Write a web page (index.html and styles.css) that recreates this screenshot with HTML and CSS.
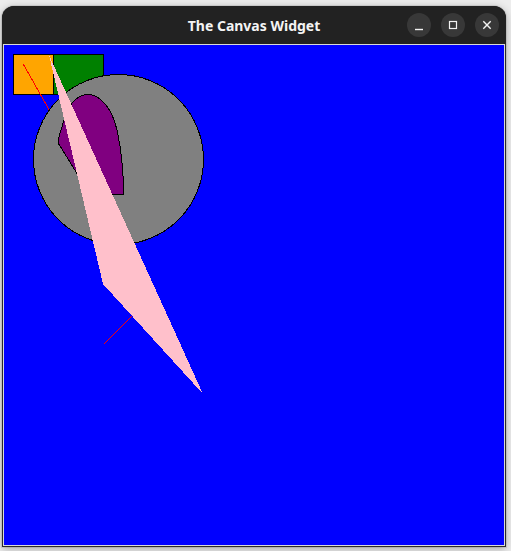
FILE: index.html
```html
<!DOCTYPE html>
<html>
<head>
<meta charset="utf-8">
<title>The Canvas Widget</title>
<link rel="stylesheet" href="styles.css">
</head>
<body>
<div class="window">
  <div class="titlebar">
    <span class="title">The Canvas Widget</span>
    <div class="controls">
      <span class="btn"><svg width="24" height="24" viewBox="0 0 24 24"><path d="M8 16.5h8" stroke="#f2f2f2" stroke-width="1.4" fill="none"/></svg></span>
      <span class="btn"><svg width="24" height="24" viewBox="0 0 24 24"><rect x="8.5" y="8.5" width="7" height="7" stroke="#f2f2f2" stroke-width="1.2" fill="none"/></svg></span>
      <span class="btn"><svg width="24" height="24" viewBox="0 0 24 24"><path d="M8.3 8.3l7.4 7.4M15.7 8.3l-7.4 7.4" stroke="#f2f2f2" stroke-width="1.4" fill="none"/></svg></span>
    </div>
  </div>
  <div class="body">
    <div class="canvas">
      <svg class="drawing" width="500" height="500" viewBox="1 1 500 500">
        <rect x="10.5" y="10.5" width="40" height="40" fill="#ffa500" stroke="#000" stroke-width="1"/>
        <rect x="50.5" y="10.5" width="50" height="40" fill="#008000" stroke="#000" stroke-width="1"/>
        <polyline points="20.5,20.5 150.5,250.5 100.5,300.5" fill="none" stroke="#ff0000" stroke-width="1"/>
        <circle cx="115.5" cy="115.5" r="85" fill="#808080" stroke="#000" stroke-width="1"/>
        <path d="M120.5 150.5 L87 150.5 L57 102 Q54 98 55.5 94.5 L61 76 C65 60 75 50.5 85 50.5 C97 50.5 109 64 114 86 C118 104 120.5 126 120.5 150.5 Z" fill="#800080" stroke="#000" stroke-width="1"/>
        <polygon points="46,11 100,240 200,350" fill="#ffc0cb"/>
      </svg>
    </div>
  </div>
</div>
</body>
</html>
```
FILE: styles.css
```css
html, body {
  margin: 0;
  padding: 0;
}
body {
  background: #ededed;
  width: 511px;
  height: 551px;
  overflow: hidden;
  padding: 6px 0 0 2px;
  box-sizing: border-box;
}
.window {
  width: 504px;
  display: flex;
  flex-direction: column;
  border-radius: 12px 12px 0 0;
  background: #222222;
  box-shadow: 0 2px 8px rgba(0, 0, 0, 0.3), 0 0 0 1px rgba(0, 0, 0, 0.08);
}
.titlebar {
  height: 38px;
  position: relative;
  display: flex;
  align-items: center;
  justify-content: center;
  border-radius: 12px 12px 0 0;
  background: #222222;
}
.title {
  font-family: "Noto Sans", "DejaVu Sans", sans-serif;
  font-weight: 700;
  font-size: 14px;
  color: #f4f4f4;
  margin-top: 1px;
}
.controls {
  position: absolute;
  right: 7px;
  top: 7px;
  display: flex;
  gap: 10px;
}
.btn {
  width: 24px;
  height: 24px;
  border-radius: 50%;
  background: #383838;
  display: block;
}
.btn svg {
  display: block;
}
.body {
  padding: 0 1px 1px 1px;
  background: #2a2a2a;
}
.canvas {
  border: 1px solid #d9d9d9;
  width: 500px;
  height: 500px;
  background: #0000ff;
}
.drawing {
  display: block;
  shape-rendering: crispEdges;
}
```
